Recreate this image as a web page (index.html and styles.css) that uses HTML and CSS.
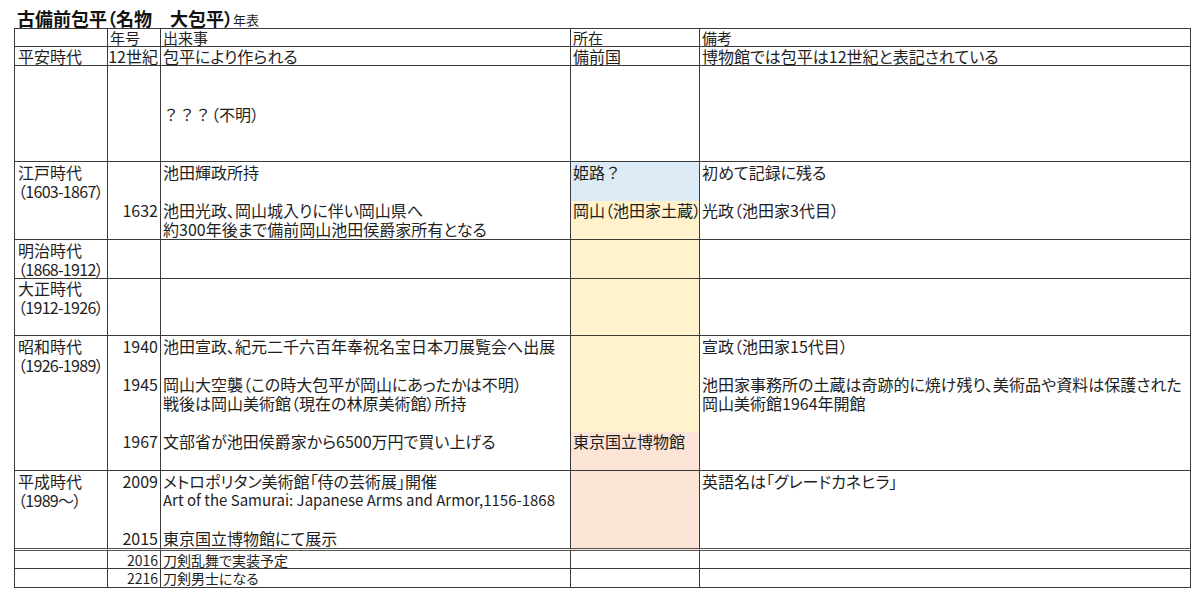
FILE: index.html
```html
<!DOCTYPE html>
<html lang="ja">
<head>
<meta charset="utf-8">
<title>古備前包平（名物　大包平）年表</title>
<link rel="stylesheet" href="styles.css">
</head>
<body>
<div class="title"><span class="t-main">古備前包平（名物　大包平）</span><span class="t-sub">年表</span></div>
<div class="sheet">
  <!-- header -->
  <div class="c hd"><div class="ln"></div></div>
  <div class="c hd"><div class="ln">年号</div></div>
  <div class="c hd"><div class="ln">出来事</div></div>
  <div class="c hd"><div class="ln">所在</div></div>
  <div class="c hd"><div class="ln">備考</div></div>

  <!-- 平安 -->
  <div class="c p1"><div class="ln">平安時代</div></div>
  <div class="c yr"><div class="ln">12世紀</div></div>
  <div class="c"><div class="ln">包平により作られる</div></div>
  <div class="c"><div class="ln">備前国</div></div>
  <div class="c"><div class="ln">博物館では包平は12世紀と表記されている</div></div>

  <!-- unknown -->
  <div class="c p1"><div class="ln"></div><div class="ln"></div><div class="ln"></div><div class="ln"></div><div class="ln"></div></div>
  <div class="c yr"><div class="ln"></div><div class="ln"></div><div class="ln"></div><div class="ln"></div><div class="ln"></div></div>
  <div class="c"><div class="ln"></div><div class="ln"></div><div class="ln"><span class="fw">？？？</span>（不明）</div><div class="ln"></div><div class="ln"></div></div>
  <div class="c"><div class="ln"></div><div class="ln"></div><div class="ln"></div><div class="ln"></div><div class="ln"></div></div>
  <div class="c"><div class="ln"></div><div class="ln"></div><div class="ln"></div><div class="ln"></div><div class="ln"></div></div>

  <!-- 江戸 -->
  <div class="c p1"><div class="ln">江戸時代</div><div class="ln rng">（1603-1867）</div><div class="ln"></div><div class="ln"></div></div>
  <div class="c yr"><div class="ln"></div><div class="ln"></div><div class="ln">1632</div><div class="ln"></div></div>
  <div class="c"><div class="ln">池田輝政所持</div><div class="ln"></div><div class="ln">池田光政、岡山城入りに伴い岡山県へ</div><div class="ln">約300年後まで備前岡山池田侯爵家所有となる</div></div>
  <div class="c"><div class="ln blue">姫路<span class="fw">？</span></div><div class="ln blue"></div><div class="ln yellow">岡山（池田家土蔵）</div><div class="ln yellow"></div></div>
  <div class="c"><div class="ln">初めて記録に残る</div><div class="ln"></div><div class="ln">光政（池田家3代目）</div><div class="ln"></div></div>

  <!-- 明治 -->
  <div class="c p1"><div class="ln">明治時代</div><div class="ln rng">（1868-1912）</div></div>
  <div class="c yr"><div class="ln"></div><div class="ln"></div></div>
  <div class="c"><div class="ln"></div><div class="ln"></div></div>
  <div class="c yellow"><div class="ln"></div><div class="ln"></div></div>
  <div class="c"><div class="ln"></div><div class="ln"></div></div>

  <!-- 大正 -->
  <div class="c p1"><div class="ln">大正時代</div><div class="ln rng">（1912-1926）</div><div class="ln"></div></div>
  <div class="c yr"><div class="ln"></div><div class="ln"></div><div class="ln"></div></div>
  <div class="c"><div class="ln"></div><div class="ln"></div><div class="ln"></div></div>
  <div class="c yellow"><div class="ln"></div><div class="ln"></div><div class="ln"></div></div>
  <div class="c"><div class="ln"></div><div class="ln"></div><div class="ln"></div></div>

  <!-- 昭和 -->
  <div class="c p1"><div class="ln">昭和時代</div><div class="ln rng">（1926-1989）</div><div class="ln"></div><div class="ln"></div><div class="ln"></div><div class="ln"></div><div class="ln"></div></div>
  <div class="c yr"><div class="ln">1940</div><div class="ln"></div><div class="ln">1945</div><div class="ln"></div><div class="ln"></div><div class="ln">1967</div><div class="ln"></div></div>
  <div class="c"><div class="ln">池田宣政、紀元二千六百年奉祝名宝日本刀展覧会へ出展</div><div class="ln"></div><div class="ln">岡山大空襲（この時大包平が岡山にあったかは不明）</div><div class="ln">戦後は岡山美術館（現在の林原美術館）所持</div><div class="ln"></div><div class="ln">文部省が池田侯爵家から6500万円で買い上げる</div><div class="ln"></div></div>
  <div class="c"><div class="ln yellow"></div><div class="ln yellow"></div><div class="ln yellow"></div><div class="ln yellow"></div><div class="ln yellow"></div><div class="ln pink">東京国立博物館</div><div class="ln pink"></div></div>
  <div class="c"><div class="ln">宣政（池田家15代目）</div><div class="ln"></div><div class="ln">池田家事務所の土蔵は奇跡的に焼け残り、美術品や資料は保護された</div><div class="ln">岡山美術館1964年開館</div><div class="ln"></div><div class="ln"></div><div class="ln"></div></div>

  <!-- 平成 -->
  <div class="c p1 dbl"><div class="ln">平成時代</div><div class="ln rng">（1989～）</div><div class="ln"></div><div class="ln"></div></div>
  <div class="c yr dbl"><div class="ln">2009</div><div class="ln"></div><div class="ln"></div><div class="ln">2015</div></div>
  <div class="c dbl"><div class="ln">メトロポリタン美術館「侍の芸術展」開催</div><div class="ln latin">Art of the Samurai: Japanese Arms and Armor,1156-1868</div><div class="ln"></div><div class="ln">東京国立博物館にて展示</div></div>
  <div class="c pink dbl"><div class="ln"></div><div class="ln"></div><div class="ln"></div><div class="ln"></div></div>
  <div class="c dbl"><div class="ln">英語名は「グレードカネヒラ」</div><div class="ln"></div><div class="ln"></div><div class="ln"></div></div>

  <!-- extra rows -->
  <div class="c sm"><div class="ln"></div></div>
  <div class="c yr sm"><div class="ln">2016</div></div>
  <div class="c sm"><div class="ln">刀剣乱舞で実装予定</div></div>
  <div class="c sm"><div class="ln"></div></div>
  <div class="c sm"><div class="ln"></div></div>

  <div class="c sm"><div class="ln"></div></div>
  <div class="c yr sm"><div class="ln">2216</div></div>
  <div class="c sm"><div class="ln">刀剣男士になる</div></div>
  <div class="c sm"><div class="ln"></div></div>
  <div class="c sm"><div class="ln"></div></div>
</div>
</body>
</html>
```

FILE: styles.css
```css
html, body {
  margin: 0;
  padding: 0;
  background: #ffffff;
}

body {
  font-family: "Noto Sans CJK JP", "Noto Sans", sans-serif;
  font-feature-settings: "palt" 1;
  color: #1e1e1e;
}

.title {
  height: 28px;
  padding-left: 17px;
  display: flex;
  align-items: flex-end;
  line-height: 1;
  white-space: nowrap;
}

.t-main {
  font-size: 18px;
  font-weight: 700;
  color: #111;
  padding-bottom: 1px;
}

.t-sub {
  font-size: 13px;
  padding-bottom: 2px;
}

.sheet {
  display: grid;
  grid-template-columns: 93px 53px 410px 129px 491px;
  grid-template-rows: 18px 19px 96px 78px 39px 57px 135px 80px 18px 19px;
  width: max-content;
  margin-left: 14px;
  border-left: 1px solid #3a3a3a;
  border-top: 1px solid #3a3a3a;
}

.c {
  display: flex;
  flex-direction: column;
  border-right: 1px solid #3a3a3a;
  border-bottom: 1px solid #3a3a3a;
  font-size: 16px;
  min-width: 0;
}

.ln {
  flex: 1 1 0;
  display: flex;
  align-items: center;
  padding: 0 2px;
  white-space: nowrap;
  line-height: 1;
}

.fw {
  font-feature-settings: normal;
}

.p1 .ln {
  padding-left: 3px;
}

.p1 .rng {
  letter-spacing: -0.7px;
}

.yr .ln {
  justify-content: flex-end;
  padding-right: 2px;
}

.hd {
  font-size: 15px;
}

.sm {
  font-size: 14px;
}

.dbl {
  border-bottom: 3px double #555;
}

.latin {
  font-size: 15px;
}

.blue {
  background: #ddebf7;
}

.yellow {
  background: #fff2cc;
}

.pink {
  background: #fce4d6;
}
```
